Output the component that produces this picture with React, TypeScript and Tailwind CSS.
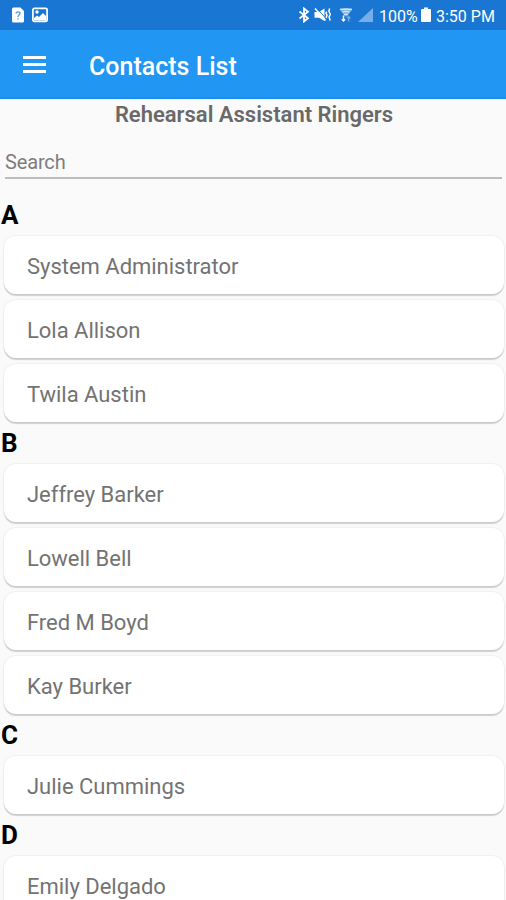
interface ContactGroup {
  letter: string;
  contacts: string[];
}

const groups: ContactGroup[] = [
  { letter: "A", contacts: ["System Administrator", "Lola Allison", "Twila Austin"] },
  { letter: "B", contacts: ["Jeffrey Barker", "Lowell Bell", "Fred M Boyd", "Kay Burker"] },
  { letter: "C", contacts: ["Julie Cummings"] },
  { letter: "D", contacts: ["Emily Delgado"] },
];

function StatusBar() {
  return (
    <div className="flex h-[30px] items-center bg-[#1976d2] pl-3 pr-[11px] text-white">
      <svg className="h-4 w-3" viewBox="0 0 12 16">
        <path d="M1.5 0.5H8.5L12 4V14a1.5 1.5 0 0 1-1.5 1.5h-9A1.5 1.5 0 0 1 0 14V2A1.5 1.5 0 0 1 1.5 0.5Z" fill="#fff" />
        <path d="M4 6.5C4 4.3 8 4.3 8 6.6C8 8.2 6 8 6 10M6 11.2V12.6" fill="none" stroke="#4f95dc" strokeWidth="1.3" />
      </svg>
      <svg className="ml-2 h-4 w-4" viewBox="0 0 16 16">
        <rect x="0.9" y="1.4" width="14.2" height="13" rx="1.5" fill="none" stroke="#fff" strokeWidth="1.8" />
        <circle cx="5" cy="5" r="1.7" fill="#fff" />
        <path d="M2 11L5 8.5L7 10L11 6L14 9V13.5H2Z" fill="#fff" />
      </svg>

      <svg className="ml-auto h-4 w-3" viewBox="0 0 12 16">
        <path d="M1.5 4.5L10 11.2L6 14.5V1.5L10 4.8L1.5 11.5" fill="none" stroke="#fff" strokeWidth="1.8" />
      </svg>
      <svg className="ml-[4px] h-4 w-[18px]" viewBox="0 0 18 16">
        <path d="M0.5 5H5L10.5 1.5V14L5 10.8H0.5Z" fill="#fff" />
        <path d="M3 1.5L12 11.5" stroke="#1976d2" strokeWidth="0.9" />
        <path d="M1 1.5L11.5 13.5" stroke="#fff" strokeWidth="1.7" />
        <path d="M12.7 4.5L12 6.2L13 8L12.2 11M15.6 1.5L14.9 4.2L16.3 7.2L15.1 10L16.2 13.5" fill="none" stroke="#fff" strokeWidth="1.5" />
      </svg>
      <svg className="ml-[7px] h-4 w-[14px]" viewBox="0 0 14 16">
        <path d="M0.5 2.5Q7 -0.5 13.5 2.5L7 10Z" fill="#fff" fillOpacity="0.45" />
        <path d="M1 2.2H13M3.5 5.2Q7 3.5 10.5 5.2M5 7.8Q7 6.5 9 7.8" fill="none" stroke="#fff" strokeOpacity="0.65" strokeWidth="1.4" />
        <path d="M4.5 8.5V14M2.8 12.3L4.5 14L6.2 12.3" fill="none" stroke="#fff" strokeOpacity="0.95" strokeWidth="1.5" />
        <path d="M9.7 14.5V9.5M8 11.2L9.7 9.5L11.4 11.2" fill="none" stroke="#fff" strokeOpacity="0.4" strokeWidth="1.3" />
      </svg>
      <svg className="ml-[5px] h-4 w-[15px]" viewBox="0 0 15 16">
        <path d="M15 1V15H0Z" fill="#77aee7" />
      </svg>
      <span className="ml-[6px] mt-[3px] w-10 whitespace-nowrap text-base leading-5">100%</span>
      <svg className="ml-[2px] h-4 w-[10px]" viewBox="0 0 10 16">
        <path d="M3 0.5H7V2H9Q10 2 10 3V14Q10 15 9 15H1Q0 15 0 14V3Q0 2 1 2H3Z" fill="#fff" />
      </svg>
      <span className="ml-[5px] mt-[3px] w-[59px] whitespace-nowrap text-base leading-5">3:50 PM</span>
    </div>
  );
}

function AppBar() {
  return (
    <header className="flex h-[69px] items-center border-b-2 border-[#1b8ff0] bg-[#2196f3] pl-[23px] pt-0.5 text-white">
      <button aria-label="Menu" className="flex w-[23px] flex-col gap-1">
        <span className="h-[3px] bg-white" />
        <span className="h-[3px] bg-white" />
        <span className="h-[3px] bg-white" />
      </button>
      <h1 className="ml-[43px] mt-1 text-[25px] font-medium">Contacts List</h1>
    </header>
  );
}

function ContactCard({ name }: { name: string }) {
  return (
    <li className="py-[3px] pl-1 pr-0.5">
      <div className="flex h-[58px] items-center rounded-xl bg-white pl-[23px] pt-[3px] text-[22px] tracking-[-0.02px] text-[#737373] shadow-[0_0_1px_1px_rgba(0,0,0,0.04),0_2px_1px_0_rgba(0,0,0,0.16)]">
        {name}
      </div>
    </li>
  );
}

export default function App() {
  return (
    <div className="h-[900px] w-[506px] overflow-hidden bg-[#fafafa] font-[Roboto,sans-serif]">
      <StatusBar />
      <AppBar />
      <main>
        <h2 className="h-8 pl-0.5 text-center text-[22px] leading-8 font-semibold text-[#696969]">
          Rehearsal Assistant Ringers
        </h2>
        <div className="ml-[5px] mr-1 mb-[18px] h-12 border-b-2 border-[#bdbdbd] pt-[17px] text-xl leading-7 tracking-[-0.15px] text-[#7d7d7d]">
          Search
        </div>
        {groups.map((group) => (
          <section key={group.letter}>
            <h3 className="h-9 pl-px text-[26px] leading-[37px] font-bold text-black">{group.letter}</h3>
            <ul>
              {group.contacts.map((name) => (
                <ContactCard key={name} name={name} />
              ))}
            </ul>
          </section>
        ))}
      </main>
    </div>
  );
}
